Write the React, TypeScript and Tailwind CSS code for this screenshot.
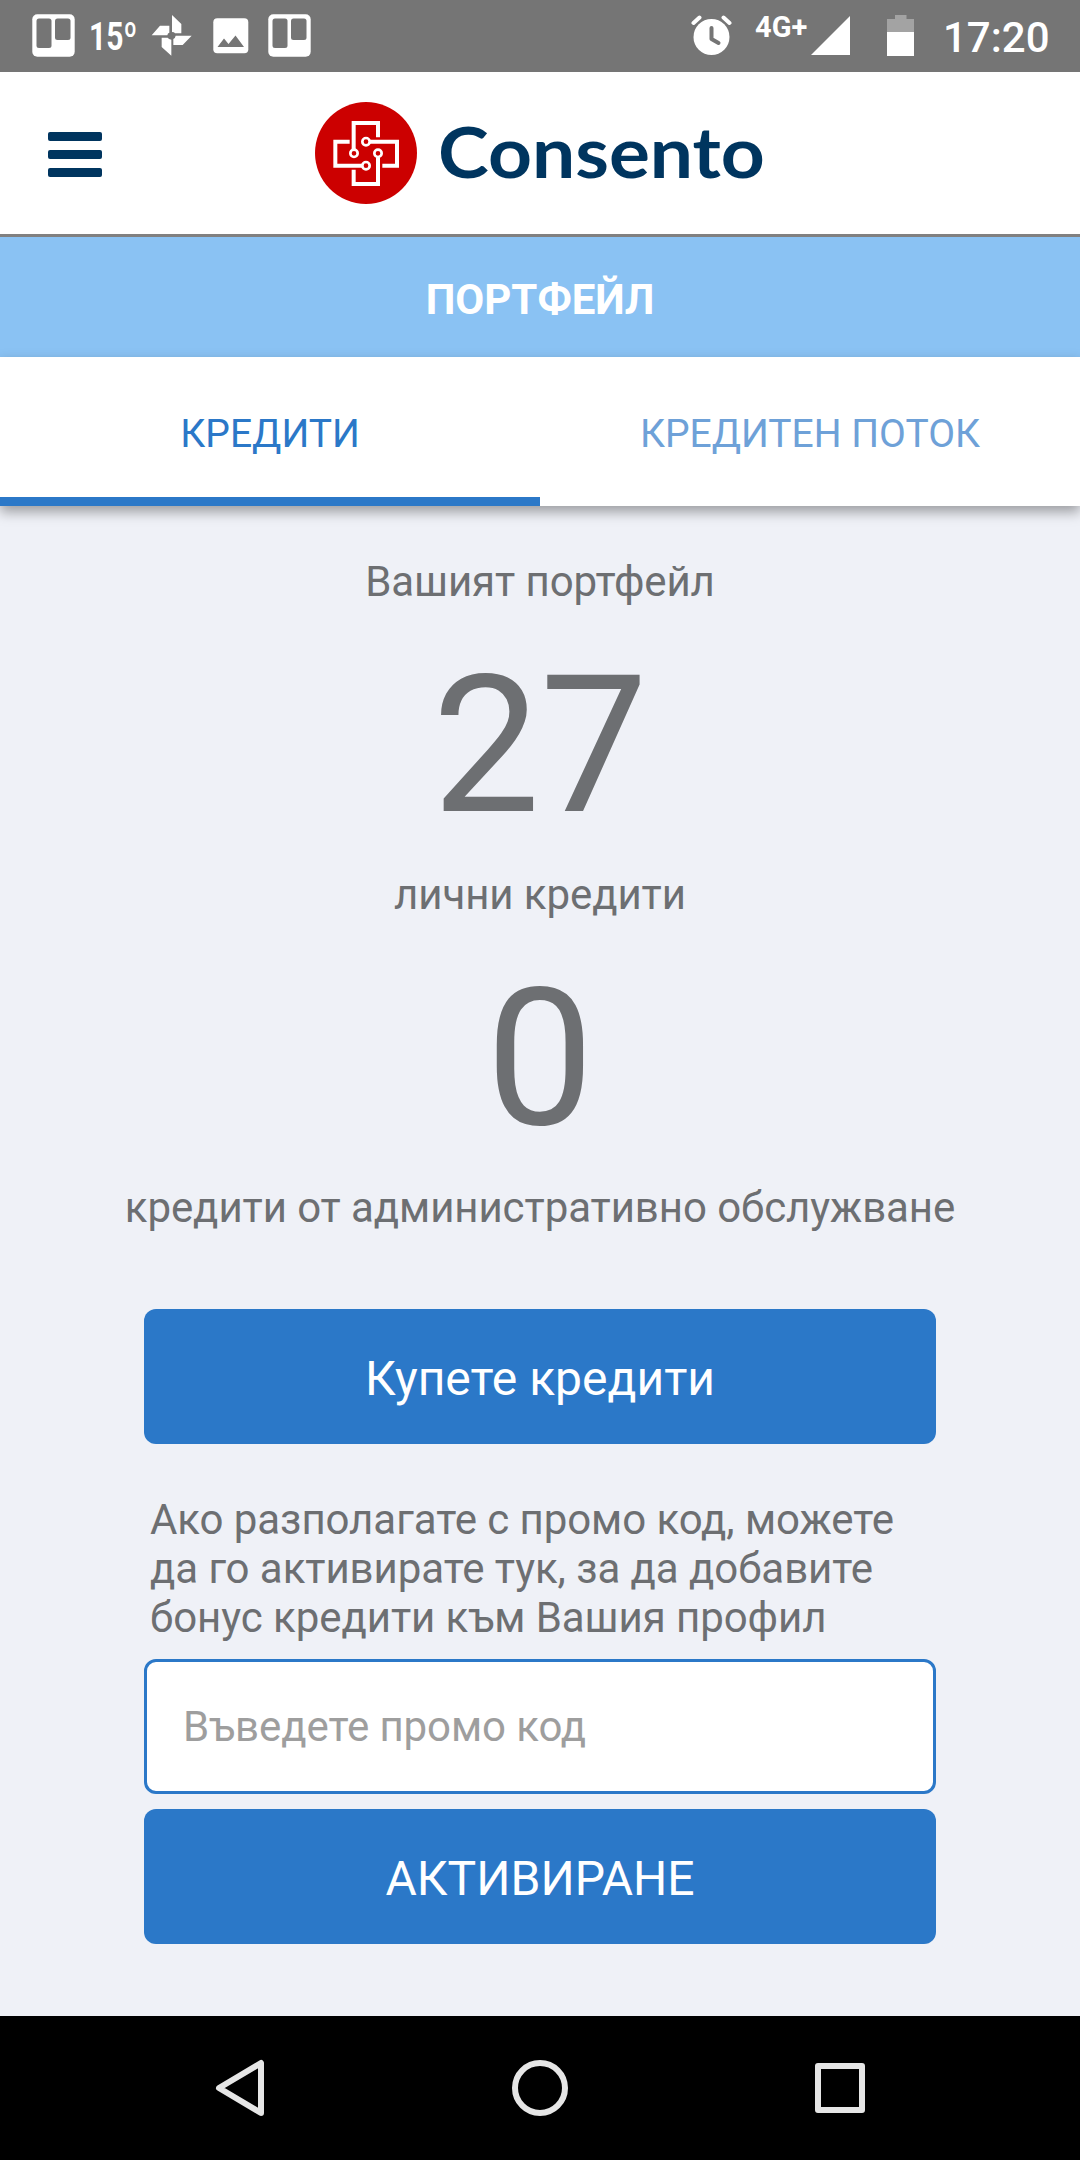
import { useState } from "react";

const TrelloIcon = ({ className = "" }: { className?: string }) => (
  <svg className={className} width="43" height="43" viewBox="0 0 43 43" fill="none">
    <rect x="0.3" y="0.3" width="42.4" height="42.4" rx="5" fill="#fff" />
    <rect x="4.5" y="4.5" width="15" height="29.5" rx="2.5" fill="#757575" />
    <rect x="23" y="4.5" width="15.5" height="21.5" rx="2.5" fill="#757575" />
  </svg>
);

const PinwheelIcon = ({ className = "" }: { className?: string }) => (
  <svg className={className} width="41" height="41" viewBox="453 45 123 123" fill="#fff">
    <path d="M516 45L544 72V100H525Q523 96 516 96Z" />
    <path d="M455 106L480 77H508V98Q503 99 502 106Z" />
    <path d="M485 113H503Q506 118 514 119V167L485 141Z" />
    <path d="M527 107H575L548 135H520V117Q526 114 527 107Z" />
  </svg>
);

const ImageIcon = ({ className = "" }: { className?: string }) => (
  <svg className={className} width="36" height="36" viewBox="0 0 36 36">
    <rect x="0.3" y="0.3" width="35" height="35" rx="4" fill="#fff" />
    <path d="M4.5 29L11 20.5L15.500 26L22.500 17.500L31 29Z" fill="#757575" />
  </svg>
);

const AlarmIcon = ({ className = "" }: { className?: string }) => (
  <svg className={className} width="42" height="42" viewBox="0 0 42 42" fill="none" strokeLinecap="round">
    <circle cx="20.500" cy="24" r="18" fill="#fff" />
    <path d="M2.500 10L8.500 4.500M32.500 4.500L38.500 10" stroke="#fff" strokeWidth="4" />
    <path d="M20.500 15V26L27.500 30" stroke="#757575" strokeWidth="4" strokeLinejoin="round" />
  </svg>
);

const Logo = () => (
  <svg width="102" height="102" viewBox="46 66 306 306" fill="none">
    <circle cx="199" cy="219" r="153" fill="#cc0000" />
    <g stroke="#fff" strokeWidth="12">
      <path d="M235 172V129H162V208" />
      <path d="M211 185H292V257H248" />
      <path d="M235 232V312H162V269" />
      <path d="M150 185H107V257H188" />
    </g>
    <g stroke="#fff" strokeWidth="8">
      <circle cx="199" cy="185" r="11" />
      <circle cx="163" cy="220" r="11" />
      <circle cx="235" cy="220" r="11" />
      <circle cx="199" cy="257" r="11" />
    </g>
  </svg>
);

const StatusBar = () => (
  <div className="flex h-[72px] items-start justify-between bg-[#757575] pl-8 pr-[31px] text-white">
    <div className="flex items-start">
      <TrelloIcon className="mt-[14px]" />
      <span className="ml-[14px] mt-[15px] block h-[45px] w-[46px] whitespace-nowrap">
        <span className="inline-block origin-left scale-x-[0.77] text-[39px] font-bold leading-[45px]">15º</span>
      </span>
      <PinwheelIcon className="ml-[16px] mt-[15px]" />
      <ImageIcon className="ml-[21px] mt-[18px]" />
      <TrelloIcon className="ml-[19px] mt-[14px]" />
    </div>
    <div className="flex items-start">
      <AlarmIcon className="mt-[13px]" />
      <span className="ml-[22px] mt-[11px] block w-[53px] whitespace-nowrap text-[29px] font-bold leading-[33px]">4G+</span>
      <svg className="ml-[3px] mt-[16px]" width="39" height="39" viewBox="0 0 39 39">
        <path d="M39 0V39H0Z" fill="#fff" />
      </svg>
      <svg className="ml-[37px] mt-[15px]" width="27" height="41" viewBox="0 0 27 41">
        <path d="M8 0H19.500V4H27V17H0V4H8Z" fill="#a3a3a3" />
        <path d="M0 17H27V41H0Z" fill="#fff" />
      </svg>
      <span className="ml-[29px] mt-[13px] block w-[106px] whitespace-nowrap text-[42px] font-medium leading-[49px]">17:20</span>
    </div>
  </div>
);

const Header = () => (
  <header className="flex h-[165px] items-start border-b-[3px] border-[#808080] bg-white">
    <button className="ml-12 mt-[60px] flex w-[54px] flex-col gap-[9px]" aria-label="Меню">
      <span className="h-[9px] w-full rounded-[2px] bg-[#00355f]" />
      <span className="h-[9px] w-full rounded-[2px] bg-[#00355f]" />
      <span className="h-[9px] w-full rounded-[2px] bg-[#00355f]" />
    </button>
    <div className="ml-[213px] mt-[30px] flex items-start">
      <Logo />
      <span className="ml-[21px] origin-left scale-x-[1.08] whitespace-nowrap font-['Lato',sans-serif] text-[71px] font-bold leading-[98px] text-[#00355f]">
        Consento
      </span>
    </div>
  </header>
);

const tabs = ["КРЕДИТИ", "КРЕДИТЕН ПОТОК"];

const Tabs = () => {
  const [active, setActive] = useState(0);

  return (
    <div className="grid h-[149px] grid-cols-2 bg-white shadow-[0_6px_12px_rgba(0,0,0,0.35)]">
      {tabs.map((label, i) => (
        <button
          key={label}
          onClick={() => setActive(i)}
          className={`border-b-[9px] pt-[13px] text-[39px] leading-[46px] ${
            i === active ? "border-[#2b78c8] text-[#2b78c8]" : "border-white text-[#6ea1d8]"
          }`}
        >
          {label}
        </button>
      ))}
    </div>
  );
};

const Credits = () => (
  <div className="flex flex-col items-center pt-[51px] text-[42px] leading-[49px] tracking-[-0.08px]">
    <p>Вашият портфейл</p>
    <p className="mt-[27px] text-[192px] leading-[225px]">27</p>
    <p className="mt-3">лични кредити</p>
    <p className="mt-[27px] text-[192px] leading-[225px]">0</p>
    <p className="mt-3">кредити от административно обслужване</p>
  </div>
);

const PromoCode = () => (
  <div className="mx-36 flex flex-col">
    <button className="mt-[77px] h-[135px] rounded-xl bg-[#2b78c8] pt-[5px] text-[48px] text-white">Купете кредити</button>
    <p className="ml-[6px] mt-[51px] whitespace-nowrap text-[42px] leading-[49px] tracking-[-0.06px]">
      Ако разполагате с промо код, можете
      <br />
      да го активирате тук, за да добавите
      <br />
      бонус кредити към Вашия профил
    </p>
    <input
      className="mt-[17px] h-[135px] rounded-xl border-[3px] border-[#2b78c8] bg-white px-9 text-[42px] tracking-[-0.08px] outline-none placeholder:text-[#9e9e9e]"
      placeholder="Въведете промо код"
    />
    <button className="mt-[15px] h-[135px] rounded-xl bg-[#2b78c8] pt-[5px] text-[48px] text-white">АКТИВИРАНЕ</button>
  </div>
);

const NavBar = () => (
  <div className="flex h-36 items-center justify-between bg-black px-[210px]">
    <svg width="60" height="60" viewBox="0 0 60 60" fill="none" stroke="#e6e6e6" strokeWidth="6" strokeLinejoin="round">
      <path d="M51 5V55L9 30Z" />
    </svg>
    <svg width="60" height="60" viewBox="0 0 60 60" fill="none" stroke="#e6e6e6" strokeWidth="6">
      <circle cx="30" cy="30" r="25" />
    </svg>
    <svg width="60" height="60" viewBox="0 0 60 60" fill="none" stroke="#e6e6e6" strokeWidth="6" strokeLinejoin="round">
      <rect x="8" y="8" width="44" height="44" />
    </svg>
  </div>
);

export default function App() {
  return (
    <div className="flex h-[2160px] w-[1080px] flex-col overflow-hidden bg-[#eff1f7] font-['Roboto',sans-serif] text-[#6d6f72]">
      <StatusBar />
      <Header />
      <h1 className="h-[120px] bg-[#8ac2f3] pt-[2px] text-center text-[42px] font-bold leading-[122px] text-white">
        ПОРТФЕЙЛ
      </h1>
      <Tabs />
      <main className="flex-1">
        <Credits />
        <PromoCode />
      </main>
      <NavBar />
    </div>
  );
}
